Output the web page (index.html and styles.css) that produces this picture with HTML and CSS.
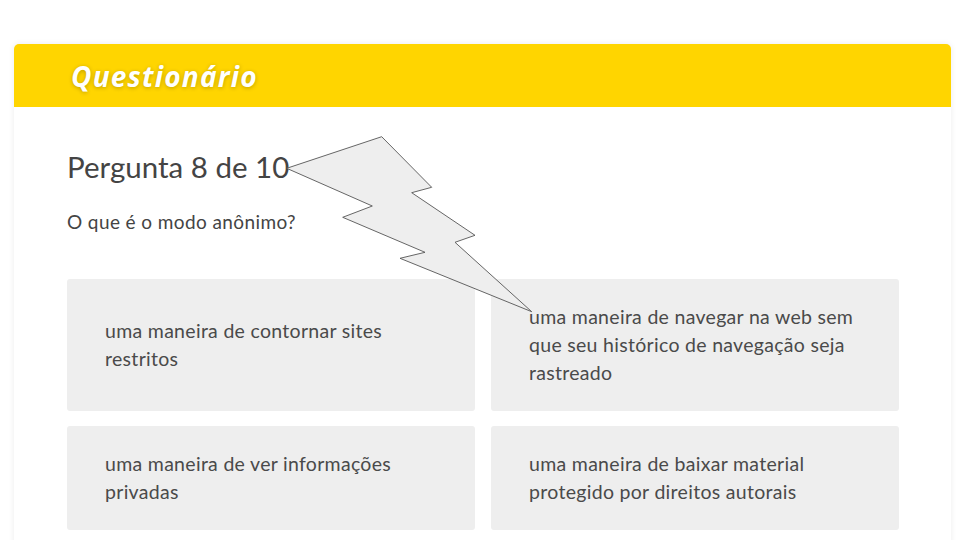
FILE: index.html
```html
<!DOCTYPE html>
<html lang="pt">
<head>
<meta charset="utf-8">
<title>Questionário</title>
<link rel="stylesheet" href="styles.css">
</head>
<body>
<div class="card">
  <div class="card-header"><h1 class="title">Questionário</h1></div>
  <div class="card-body">
    <h2 class="question-count">Pergunta 8 de 10</h2>
    <p class="question">O que é o modo anônimo?</p>
    <div class="options">
      <div class="option">uma maneira de contornar sites restritos</div>
      <div class="option">uma maneira de navegar na web sem que seu histórico de navegação seja rastreado</div>
      <div class="option">uma maneira de ver informações privadas</div>
      <div class="option">uma maneira de baixar material protegido por direitos autorais</div>
    </div>
  </div>
</div>
<svg class="bolt" width="960" height="540" viewBox="0 0 960 540" aria-hidden="true">
  <polygon points="286.7,168.3 381.7,136.7 431.7,187.3 411.7,192.7 475,235.3 455,242.3 531.7,311.7 400,258.3 425,252.3 342.7,217.3 372.3,206" fill="#eeeeee" stroke="#555" stroke-width="0.9" stroke-linejoin="miter"/>
</svg>
</body>
</html>
```

FILE: styles.css
```css
html, body {
  margin: 0;
  padding: 0;
  background: #ffffff;
}
body {
  position: relative;
  width: 960px;
  height: 540px;
  overflow: hidden;
  font-family: "Lato", "Open Sans", sans-serif;
  color: #444;
}
.card {
  margin: 44px 9px 0 14px;
  width: 937px;
  border-radius: 5px 5px 0 0;
  box-shadow: 0 0 6px rgba(0,0,0,0.08);
  background: #fff;
  min-height: 520px;
}
.card-header {
  background: #ffd500;
  height: 63px;
  border-radius: 5px 5px 0 0;
  display: flex;
  align-items: center;
  padding-left: 57px;
}
.title {
  margin: 0;
  font-family: "Open Sans", sans-serif;
  font-style: italic;
  font-weight: 700;
  font-size: 28px;
  color: #fff;
  text-shadow: 0 1px 4px rgba(0,0,0,0.25);
  letter-spacing: 1.2px;
}
.card-body {
  padding: 42px 52px 0 53px;
}
.question-count {
  margin: 0;
  font-weight: 400;
  font-size: 29.5px;
  line-height: 36px;
  color: #444;
}
.question {
  margin: 25px 0 0;
  font-size: 19px;
  line-height: 24px;
  letter-spacing: 0.4px;
  color: #444;
}
.options {
  margin-top: 45px;
  display: grid;
  grid-template-columns: 408px 408px;
  column-gap: 16px;
  row-gap: 15px;
}
.option {
  background: #eeeeee;
  border-radius: 3px;
  padding: 24px 38px 24px 38px;
  font-size: 19.5px;
  line-height: 28px;
  letter-spacing: 0.3px;
  color: #4a4a4a;
  display: flex;
  align-items: center;
}
.bolt {
  position: absolute;
  left: 0;
  top: 0;
  pointer-events: none;
}
```
